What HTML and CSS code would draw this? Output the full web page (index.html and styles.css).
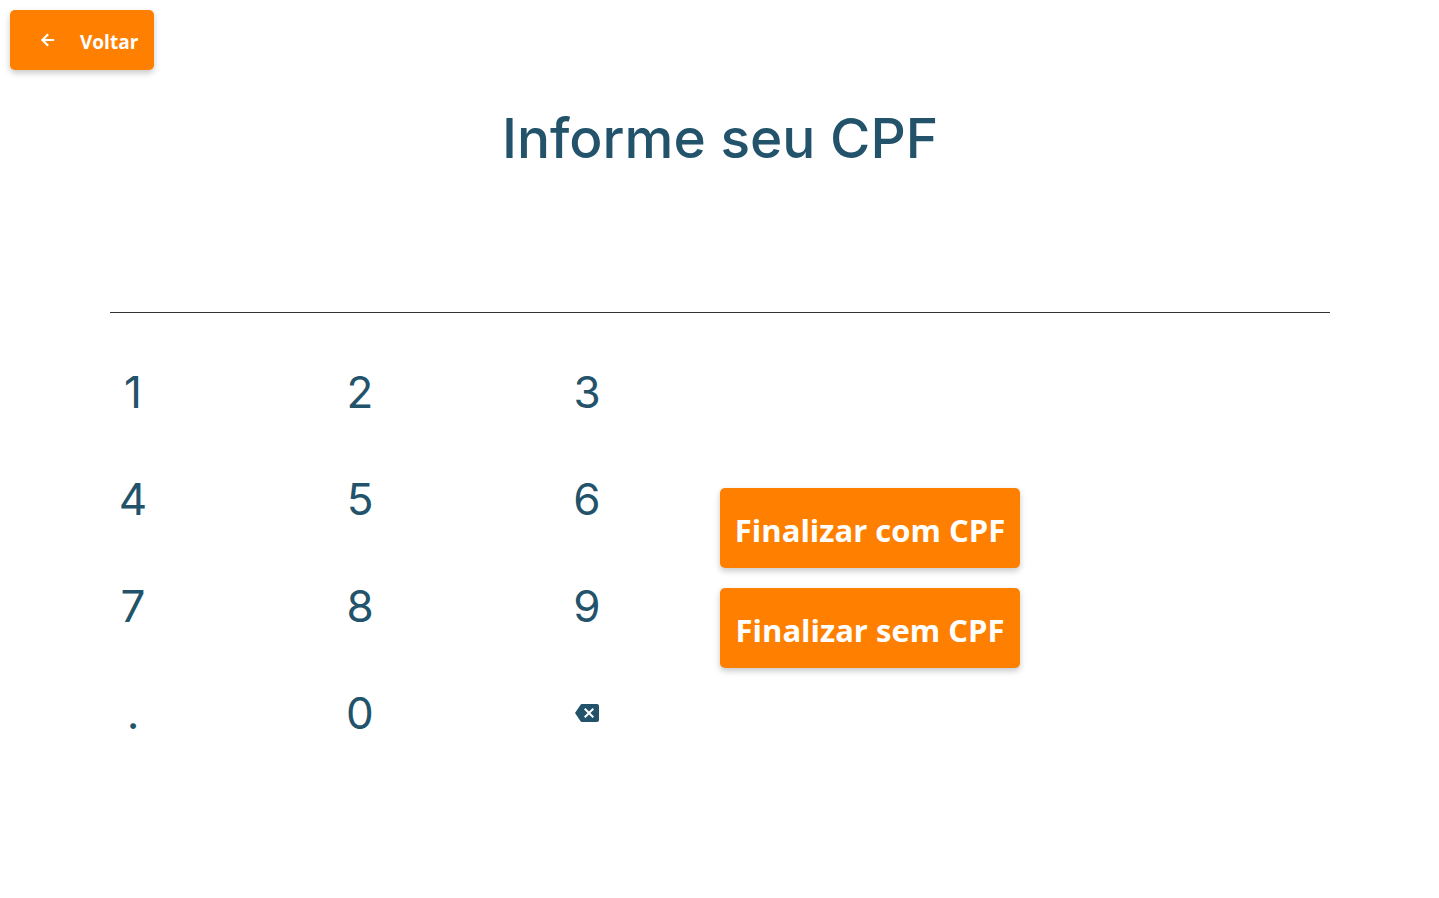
FILE: index.html
```html
<!DOCTYPE html>
<html lang="pt-BR">
<head>
  <meta charset="utf-8">
  <meta name="viewport" content="width=device-width, initial-scale=1">
  <title>Informe seu CPF</title>
  <link rel="stylesheet" href="styles.css">
</head>
<body>
  <header class="topbar">
    <button class="btn btn-back" type="button">
      <svg class="back-icon" viewBox="0 0 24 24" aria-hidden="true"><path d="M19.300 10.700H8.400l4.700-4.700-1.900-1.900L3.500 12l7.700 7.900 1.900-1.900-4.700-4.700h10.900z"/></svg>
      <span>Voltar</span>
    </button>
  </header>
  <main class="page">
    <h1 class="title"><label for="cpf">Informe seu CPF</label></h1>
    <input class="cpf-input" id="cpf" type="text" inputmode="numeric" autocomplete="off">
    <div class="panel">
      <div class="keypad">
        <button class="key" type="button">1</button>
        <button class="key" type="button">2</button>
        <button class="key" type="button">3</button>
        <button class="key" type="button">4</button>
        <button class="key" type="button">5</button>
        <button class="key" type="button">6</button>
        <button class="key" type="button">7</button>
        <button class="key" type="button">8</button>
        <button class="key" type="button">9</button>
        <button class="key" type="button">.</button>
        <button class="key" type="button">0</button>
        <button class="key" type="button" aria-label="Apagar">
          <svg class="erase-icon" viewBox="0 0 24 24" aria-hidden="true"><path d="M22 3H7c-.7 0-1.200.4-1.600.9L0 12l5.400 8.100c.4.500.9.900 1.600.900h15c1.100 0 2-.9 2-2V5c0-1.100-.9-2-2-2zm-3 12.600L17.600 17 14 13.400 10.400 17 9 15.600l3.600-3.600L9 8.400 10.400 7l3.600 3.600L17.600 7 19 8.400 15.400 12z"/></svg>
        </button>
      </div>
      <div class="actions">
        <button class="btn btn-finish" type="button">Finalizar com CPF</button>
        <button class="btn btn-finish" type="button">Finalizar sem CPF</button>
      </div>
    </div>
  </main>
</body>
</html>
```
FILE: styles.css
```css
* {
  box-sizing: border-box;
}

body {
  margin: 0;
  background: #fff;
  color: #22536b;
  font-family: Inter, "Liberation Sans", sans-serif;
}

button {
  border: 0;
  cursor: pointer;
}

.topbar {
  padding: 10px;
}

.btn {
  border-radius: 5px;
  background: #ff8000;
  box-shadow: 0 3px 6px rgba(0, 0, 0, 0.22);
  color: #fff;
  font-family: "Open Sans", "Noto Sans", sans-serif;
  font-weight: 700;
}

.btn-back {
  display: flex;
  align-items: center;
  gap: 22px;
  height: 60px;
  padding: 0 16px 0 28px;
  font-size: 19px;
  line-height: 24px;
}

.btn-back span {
  padding-top: 4px;
}

.back-icon {
  width: 20px;
  height: 20px;
  fill: currentColor;
}

.page {
  padding: 0 109px 0 110px;
}

.title {
  margin: 0;
  padding: 26px 0;
  font-size: 55px;
  font-weight: 500;
  line-height: 64px;
  text-align: center;
}

.cpf-input {
  display: block;
  width: 100%;
  height: 117px;
  padding: 0;
  border: 0;
  border-bottom: 1px solid #333;
  outline: 0;
  background: transparent;
  color: inherit;
  font: inherit;
  font-size: 44px;
  text-align: center;
}

.panel {
  display: grid;
  grid-template-columns: 1fr 1fr;
  align-items: center;
  padding-top: 25px;
}

.keypad {
  display: grid;
  grid-template-columns: repeat(3, 46px);
  grid-auto-rows: 107px;
  justify-content: space-between;
  margin-right: 110px;
}

.key {
  display: grid;
  place-items: center;
  padding: 0;
  background: transparent;
  color: inherit;
  font-family: inherit;
  font-size: 44px;
  line-height: 54px;
}

.erase-icon {
  width: 24px;
  height: 24px;
  fill: currentColor;
}

.actions {
  display: grid;
  grid-template-columns: minmax(0, 300px);
  gap: 20px;
  padding-top: 52px;
}

.btn-finish {
  height: 80px;
  padding: 4px 0 0;
  font-size: 31px;
  line-height: 40px;
  white-space: nowrap;
}
```
